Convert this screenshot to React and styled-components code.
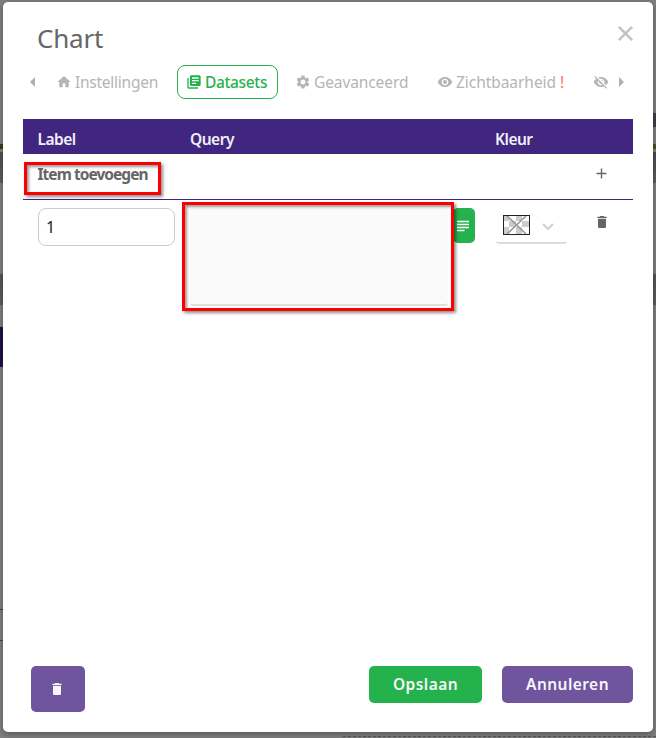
import React from "react";
import styled, { createGlobalStyle } from "styled-components";
import {
  MdAdd,
  MdArrowLeft,
  MdArrowRight,
  MdClose,
  MdDelete,
  MdHome,
  MdLibraryBooks,
  MdSettings,
  MdSubject,
  MdVisibility,
  MdVisibilityOff,
} from "react-icons/md";

const GlobalStyle = createGlobalStyle`
  *, *::before, *::after { box-sizing: border-box; }
  body { margin: 0; }
  button, input, textarea { font: inherit; margin: 0; }
  svg { display: block; flex: none; }
`;

const Backdrop = styled.div`
  width: 656px;
  height: 738px;
  padding: 2px 3px 6px;
  overflow: hidden;
  font-family: "Noto Sans", sans-serif;
  background:
    repeating-linear-gradient(90deg, #555 0 3px, transparent 3px 5px) 343px 736px / 313px 1px no-repeat,
    linear-gradient(#334018, #334018) 0 144px / 3px 5px no-repeat,
    linear-gradient(#211047, #211047) 0 327px / 3px 40px no-repeat,
    linear-gradient(#505050, #606060) 0 152px / 3px 31px no-repeat,
    linear-gradient(#555, #5f5f5f) 0 274px / 3px 31px no-repeat,
    linear-gradient(#444, #444) 0 640px / 3px 1px no-repeat,
    linear-gradient(#444, #444) 0 609px / 3px 1px no-repeat,
    linear-gradient(#3c414b, #3c414b) 653px 113px / 3px 14px no-repeat,
    linear-gradient(#3c5a28, #3c5a28) 653px 144px / 3px 5px no-repeat,
    linear-gradient(#4c4c4c, #606060) 653px 152px / 3px 31px no-repeat,
    linear-gradient(#555, #5f5f5f) 653px 274px / 3px 31px no-repeat,
    #808080;
`;

const Dialog = styled.section`
  display: flex;
  flex-direction: column;
  height: 730px;
  padding: 0 20px;
  border-radius: 5px;
  background: #fff;
  box-shadow: 0 2px 7px rgba(0, 0, 0, 0.35);
`;

const DialogHeader = styled.header`
  display: flex;
  justify-content: space-between;
  height: 63px;
  padding: 16px 0 0 14px;
`;

const Title = styled.h1`
  margin: 0;
  font-size: 26px;
  line-height: 40px;
  font-weight: 400;
  letter-spacing: -0.2px;
  color: #666;
`;

const IconButton = styled.button`
  display: flex;
  align-items: center;
  justify-content: center;
  width: ${(p) => p.$size}px;
  height: ${(p) => p.$size}px;
  padding: 0;
  border: 0;
  background: none;
  color: ${(p) => p.$color};
`;

const CloseButton = styled(IconButton)`
  margin: 3px -5px 0 0;

  path:last-child {
    stroke: currentColor;
    stroke-width: 0.5;
  }
`;

const AddButton = styled(IconButton)`
  margin-top: 3px;
`;

const TabBar = styled.nav`
  display: flex;
  align-items: center;
  height: 34px;
  margin-bottom: 20px;
  color: #b5b5b5;
`;

const TabArrow = styled(IconButton)`
  width: 12px;
  margin-left: ${(p) => p.$gap}px;
  overflow: hidden;
`;

const Tab = styled.div`
  display: flex;
  align-items: center;
  flex: none;
  gap: 3px;
  width: ${(p) => p.$width}px;
  height: 34px;
  padding-left: ${(p) => (p.$active ? 8 : 9)}px;
  margin-left: ${(p) => p.$gap}px;
  border: 1px solid ${(p) => (p.$active ? "#24b24c" : "transparent")};
  border-radius: 8px;
  color: ${(p) => (p.$active ? "#24b24c" : "#b5b5b5")};
  font-size: 15.5px;
  font-weight: ${(p) => (p.$active ? 500 : 400)};
  letter-spacing: ${(p) => p.$spacing || 0}px;
  white-space: nowrap;
`;

const Warning = styled.span`
  margin-left: 1px;
  color: #ff8080;
  font-weight: 500;
`;

const TableHead = styled.div`
  display: grid;
  grid-template-columns: 152.5px 305px 90px 1fr;
  align-items: center;
  flex: none;
  height: 35px;
  padding: 5px 0 0 14.5px;
  background: #40267f;
  color: #f2eff8;
  font-size: 15.5px;
  line-height: 20px;
  font-weight: 600;
  letter-spacing: -0.5px;
`;

const AddRow = styled.div`
  display: flex;
  justify-content: space-between;
  flex: none;
  height: 46px;
  padding: 8px 23px 0 14.5px;
  border-bottom: 1px solid #40267f;
  color: #666;
`;

const AddLabel = styled.div`
  position: relative;
  height: 25px;
  font-size: 15.5px;
  font-weight: 700;
  line-height: 25px;
  letter-spacing: -0.95px;
`;

const Highlight = styled.div`
  position: absolute;
  pointer-events: none;
  top: ${(p) => p.$top}px;
  left: ${(p) => p.$left}px;
  width: ${(p) => p.$width}px;
  height: ${(p) => p.$height}px;
  border: 3px solid #f00;
  box-shadow: 2px 2px 3px rgba(0, 0, 0, 0.45), inset 2px 2px 3px rgba(0, 0, 0, 0.4);
`;

const DataRow = styled.div`
  display: grid;
  grid-template-columns: 152px 306px 92px 1fr;
  align-items: start;
  padding: 8px 0 0 15px;
`;

const LabelInput = styled.input`
  width: 137px;
  height: 38px;
  padding: 0 8px 0 7px;
  border: 1px solid #ccc;
  border-radius: 8px;
  background: #fff;
  color: #222;
  font-size: 16px;
  outline: none;
`;

const QueryField = styled.div`
  position: relative;
  display: flex;
  align-items: flex-start;
`;

const QueryArea = styled.textarea`
  display: block;
  width: 258px;
  height: 98px;
  border: 0;
  border-bottom: 2px solid #ddd;
  border-radius: 3px;
  background: #fafafa;
  resize: none;
  outline: none;
`;

const ExpandButton = styled.button`
  display: flex;
  align-items: center;
  justify-content: center;
  width: 22px;
  height: 35px;
  padding: 0 2px 0 0;
  margin-left: 5px;
  border: 0;
  border-radius: 5px;
  background: #24b24c;
  color: #fff;
`;

const ColorSelect = styled.div`
  display: flex;
  align-items: flex-start;
  gap: 12px;
  width: 71px;
  height: 36px;
  padding: 7px 0 0 7px;
  border-bottom: 2px solid #ddd;
  border-radius: 3px;
`;

const ChevronBox = styled.span`
  display: flex;
  padding-top: 8px;
`;

const Footer = styled.footer`
  display: flex;
  align-items: flex-start;
  gap: 20px;
  margin-top: auto;
  height: 66px;
  padding-left: 8px;
`;

const Button = styled.button`
  display: flex;
  align-items: center;
  justify-content: center;
  width: ${(p) => p.$width}px;
  height: ${(p) => p.$height || 37}px;
  padding: 0 0 1px;
  border: 0;
  border-radius: 5px;
  background: ${(p) => (p.$primary ? "#24b24c" : "#6f549e")};
  color: #f8f6fb;
  font-size: 15.5px;
  font-weight: 600;
  letter-spacing: 0.45px;
`;

const DeleteButton = styled(Button)`
  margin-right: auto;
  padding: 0 2px 0 0;
`;

function TransparentSwatch() {
  return (
    <svg width="27" height="20" viewBox="0 0 27 20">
      <rect width="27" height="20" fill="#fff" />
      <path
        d="M1 1h5v5H1zM13 1h6v5h-6zM6 6h7v6H6zM19 6h7v6h-7zM1 12h5v7H1zM13 12h6v7h-6z"
        fill="#ccc"
      />
      <path d="M4 1l19 18M23 1L4 19" stroke="#999" strokeWidth="1.7" />
      <rect x=".5" y=".5" width="26" height="19" fill="none" stroke="#222" />
    </svg>
  );
}

function Chevron() {
  return (
    <svg width="12" height="8" viewBox="0 0 12 8">
      <path d="M1 1l5 5 5-5" fill="none" stroke="#d0d0d0" strokeWidth="2" />
    </svg>
  );
}

export default function App() {
  return (
    <>
      <GlobalStyle />
      <Backdrop>
        <Dialog role="dialog" aria-label="Chart">
          <DialogHeader>
            <Title>Chart</Title>
            <CloseButton $size={25} $color="#c2c2c2" aria-label="Sluiten">
              <MdClose size={25} />
            </CloseButton>
          </DialogHeader>

          <TabBar>
            <TabArrow $size={24} $color="#b0b0b0" $gap={4} aria-label="Vorige">
              <MdArrowLeft size={24} />
            </TabArrow>
            <Tab $width={121} $gap={7} $spacing={-0.25}>
              <MdHome size={16} />
              Instellingen
            </Tab>
            <Tab $width={101} $gap={10} $spacing={-0.35} $active>
              <MdLibraryBooks size={16} />
              Datasets
            </Tab>
            <Tab $width={133} $gap={7} $spacing={-0.1}>
              <MdSettings size={16} />
              Geavanceerd
            </Tab>
            <Tab $width={149} $gap={9} $spacing={-0.05}>
              <MdVisibility size={16} />
              <span>Zichtbaarheid</span>
              <Warning>!</Warning>
            </Tab>
            <Tab $width={26} $gap={7}>
              <MdVisibilityOff size={16} />
            </Tab>
            <TabArrow $size={24} $color="#b0b0b0" $gap={6} aria-label="Volgende">
              <MdArrowRight size={24} />
            </TabArrow>
          </TabBar>

          <TableHead>
            <span>Label</span>
            <span>Query</span>
            <span>Kleur</span>
          </TableHead>
          <AddRow>
            <AddLabel>
              Item toevoegen
              <Highlight $top={0} $left={-13.5} $width={137} $height={33} />
            </AddLabel>
            <AddButton $size={17} $color="#666" aria-label="Toevoegen">
              <MdAdd size={17} />
            </AddButton>
          </AddRow>
          <DataRow>
            <LabelInput defaultValue="1" aria-label="Label" />
            <QueryField>
              <QueryArea aria-label="Query" />
              <ExpandButton aria-label="Query bewerken">
                <MdSubject size={18} />
              </ExpandButton>
              <Highlight $top={-6} $left={-8} $width={272} $height={109} />
            </QueryField>
            <ColorSelect>
              <TransparentSwatch />
              <ChevronBox>
                <Chevron />
              </ChevronBox>
            </ColorSelect>
            <IconButton $size={27} $color="#666" aria-label="Verwijderen">
              <MdDelete size={16} />
            </IconButton>
          </DataRow>

          <Footer>
            <DeleteButton $width={54} $height={46} aria-label="Chart verwijderen">
              <MdDelete size={16} />
            </DeleteButton>
            <Button $width={113} $primary>Opslaan</Button>
            <Button $width={131}>Annuleren</Button>
          </Footer>
        </Dialog>
      </Backdrop>
    </>
  );
}
